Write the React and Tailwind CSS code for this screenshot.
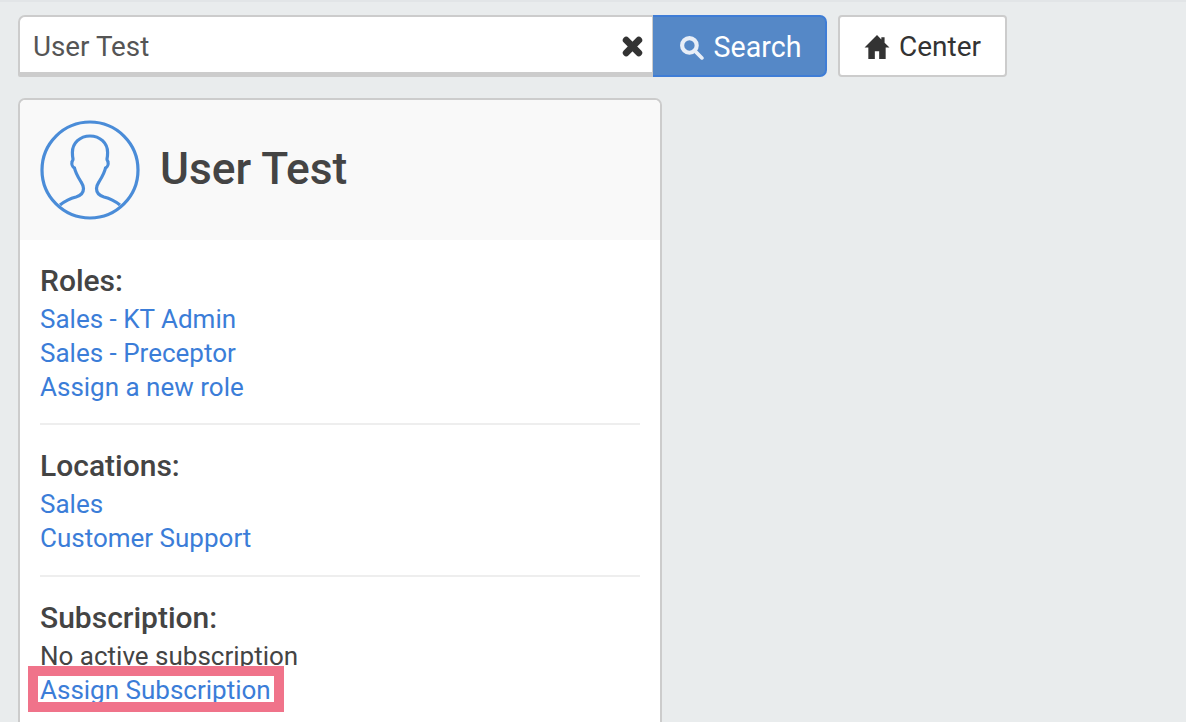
function Avatar() {
  return (
    <svg width="100" height="100" viewBox="0 0 100 100" fill="none" stroke="#4a8cd8" strokeWidth="3.2" className="shrink-0">
      <circle cx="50" cy="50" r="48" />
      <path d="M20 85c5-4 10-6.500 16-8 5-1.500 7.500-4.500 7.500-8.500 0-3-1.500-5-3-7.500-2.500-4-5-8.500-6-13-2-1-3-4-2.500-6 .3-1.500 1.200-2 1-3-.5-2-.6-4-.6-6.500C32.400 23 40 16 50 16s17.600 7 17.600 16.500c0 2.500-.1 4.500-.6 6.500-.2 1 .7 1.500 1 3 .5 2-.5 5-2.500 6-1 4.500-3.500 9-6 13-1.500 2.500-3 4.500-3 7.500 0 4 2.500 7 7.500 8.500 6 1.500 11 4 16 8" />
    </svg>
  );
}

function HomeIcon() {
  return (
    <svg width="26" height="26" viewBox="0 0 24 24" fill="#333333" className="shrink-0">
      <path d="M12 1 0.500 12.500h3.500V23h6v-7h4v7h6V12.500h3.500L19 8V3h-3v2z" />
    </svg>
  );
}

function ClearIcon() {
  return (
    <svg width="21" height="21" viewBox="0 0 20 20" stroke="#333333" strokeWidth="6.500" strokeLinecap="round">
      <path d="M4 4 16 16M16 4 4 16" />
    </svg>
  );
}

function SearchIcon() {
  return (
    <svg width="25" height="25" viewBox="0 0 24 24" fill="none" stroke="#e8eef7" className="shrink-0">
      <circle cx="10" cy="10" r="7" strokeWidth="4" />
      <path d="M15 15 22 22" strokeWidth="3.500" strokeLinecap="round" />
    </svg>
  );
}

function Section({ title, children, className = "" }) {
  return (
    <div className={className}>
      <h3 className="text-[30px] leading-[34px] font-medium text-[#444444] mb-[4px]">{title}</h3>
      {children}
    </div>
  );
}

function Link({ children }) {
  return <a className="block text-[26px] leading-[34px] text-[#3b7dd8]">{children}</a>;
}

export default function App() {
  return (
    <div className="h-[722px] overflow-hidden bg-[#e9eced] border-t-2 border-[#e2e5e7] pl-[18px] pt-[13px] font-['Roboto',sans-serif]">
      <div className="flex items-start">
        <div className="w-[636px] h-[62px] flex items-center justify-between bg-white border-2 border-b-[5px] border-[#cccccc] rounded-tl-[7px] rounded-bl-[2px] pl-[13px] pr-[9px] pt-[4px]">
          <span className="text-[27.800px] text-[#555555]">User Test</span>
          <ClearIcon />
        </div>
        <button className="w-[174px] h-[62px] -ml-px pt-[3px] pl-[2px] flex items-center justify-center gap-[10px] bg-[#5588c7] border-2 border-[#3f7dd6] border-l-0 rounded-r-[7px] text-white text-[28.600px]">
          <SearchIcon />
          Search
        </button>
        <button className="w-[169px] h-[62px] ml-[11px] pt-[1px] flex items-center justify-center gap-[9px] bg-white border-2 border-[#cccccc] rounded-[4px] text-[#333333] text-[28px]">
          <HomeIcon />
          Center
        </button>
      </div>

      <div className="relative w-[644px] h-[700px] mt-[21px] bg-white border-2 border-[#cccccc] rounded-[7px]">
        <div className="h-[140px] flex items-center gap-[20px] pl-[20px] bg-[#f9f9f9] rounded-t-[6px]">
          <Avatar />
          <h1 className="text-[44.300px] font-medium text-[#444444] -mt-[2px]">User Test</h1>
        </div>
        <div className="px-[20px] pt-[24px]">
          <Section title="Roles:" className="border-b-2 border-[#eeeeee] pb-[19px] mb-[24px]">
            <Link>Sales - KT Admin</Link>
            <Link>Sales - Preceptor</Link>
            <Link>Assign a new role</Link>
          </Section>
          <Section title="Locations:" className="border-b-2 border-[#eeeeee] pb-[20px] mb-[24px]">
            <Link>Sales</Link>
            <Link>Customer Support</Link>
          </Section>
          <Section title="Subscription:">
            <p className="text-[26px] leading-[34px] text-[#444444]">No active subscription</p>
            <div className="relative">
              <Link>Assign Subscription</Link>
              <div className="absolute -left-[12px] -top-[7px] w-[256px] h-[46px] border-[10px] border-[#f0738a]" />
            </div>
          </Section>
        </div>
      </div>
    </div>
  );
}
